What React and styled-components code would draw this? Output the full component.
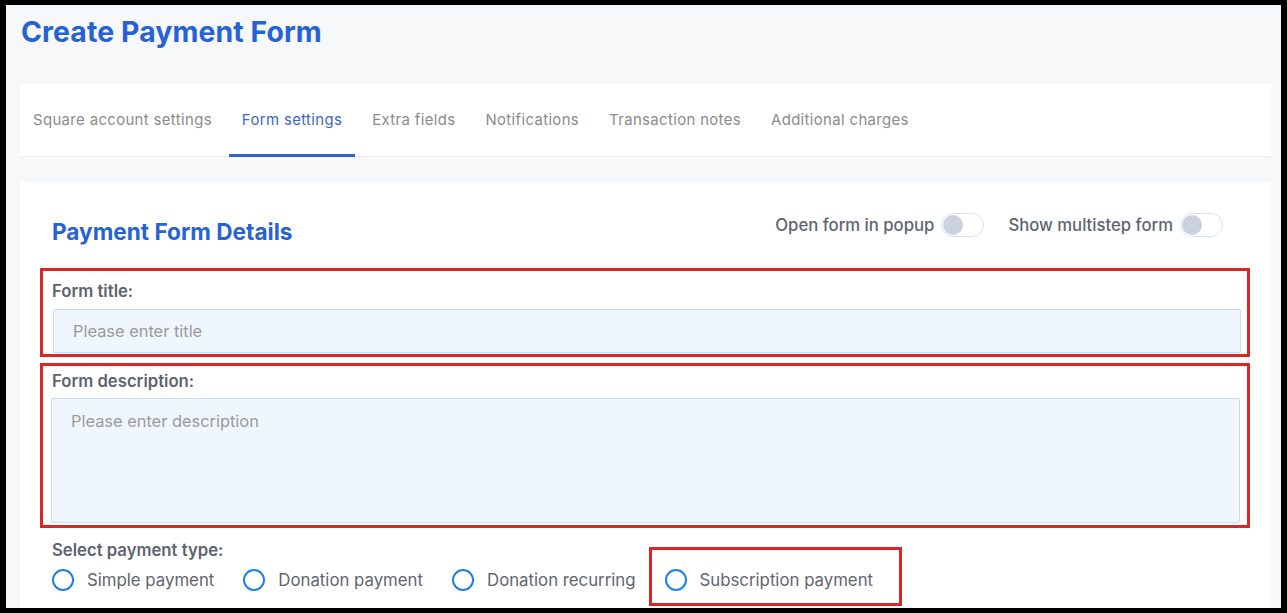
import React from "react";
import styled, { createGlobalStyle } from "styled-components";

const Global = createGlobalStyle`
  html, body { margin: 0; padding: 0; background: #000; }
  body { font-family: "Inter", "Liberation Sans", sans-serif; }
  * { box-sizing: border-box; }
`;

const Frame = styled.div`
  width: 1287px;
  height: 613px;
  padding: 5px 6px 5px 6px;
  background: #000;
`;

const Page = styled.div`
  width: 1275px;
  height: 603px;
  background: #f7f8fa;
  overflow: hidden;
  padding: 10px 10px 0 14px;
`;

const Title = styled.h1`
  margin: 0 0 0 1px;
  font-size: 28.4px;
  line-height: 34px;
  font-weight: 700;
  color: #2762d3;
  letter-spacing: 0.1px;
`;

const TabBar = styled.nav`
  margin-top: 35px;
  background: #fff;
  height: 73px;
  border-bottom: 1px solid #eceef2;
  display: flex;
  gap: 4px;
`;

const Tab = styled.div`
  padding: 0 13px;
  display: flex;
  align-items: center;
  font-size: 14.9px;
  letter-spacing: 0.37px;
  color: ${(p) => (p.$active ? "#3b67c6" : "#8b8b8b")};
  border-bottom: 3px solid ${(p) => (p.$active ? "#2c64cc" : "transparent")};
  margin-bottom: -1px;
  padding-top: 1px;
`;

const Card = styled.section`
  margin-top: 25px;
  background: #fff;
  padding: 26px 21px 0 20px;
  height: 440px;
`;

const HeaderRow = styled.div`
  display: flex;
  align-items: center;
  justify-content: space-between;
  height: 40px;
  padding: 0 27px 0 12px;
  margin-bottom: 20px;
`;

const Heading = styled.h2`
  margin: 6px 0 0 0;
  font-size: 22.6px;
  font-weight: 700;
  color: #2762d3;
`;

const Toggles = styled.div`
  display: flex;
  align-items: center;
  gap: 24px;
  margin-top: -6px;
`;

const ToggleLabel = styled.label`
  display: flex;
  align-items: center;
  gap: 7px;
  font-size: 16.7px;
  font-weight: 500;
  color: #5d6571;
`;

const Track = styled.span`
  width: 43px;
  height: 24px;
  border-radius: 12px;
  border: 1.5px solid #d6e3f7;
  background: #fff;
  display: flex;
  align-items: center;
  padding-left: 1px;
`;

const Knob = styled.span`
  width: 20px;
  height: 20px;
  border-radius: 50%;
  background: #cbd2dd;
`;

const Marked = styled.div`
  border: 3px solid #dc2626;
  padding: ${(p) => p.$pad};
  margin-bottom: ${(p) => p.$mb || 0};
`;

const FieldLabel = styled.div`
  font-size: 16.7px;
  font-weight: 600;
  line-height: 20px;
  color: #5c6470;
  margin-left: ${(p) => p.$ml || "0"};
  margin-bottom: ${(p) => p.$mb};
`;

const Input = styled.input`
  display: block;
  width: 100%;
  height: 44px;
  background: #f0f6fe;
  border: 1px solid #cbdaee;
  border-radius: 2px;
  padding: 0 19px;
  font-family: inherit;
  font-size: 16.4px;
  color: #333;
  outline: none;
  &::placeholder { color: #9a9a9a; }
`;

const TextArea = styled.textarea`
  display: block;
  width: 100%;
  height: 125px;
  background: #f0f6fe;
  border: 1px solid #cbdaee;
  border-radius: 2px;
  padding: 12px 19px;
  font-family: inherit;
  font-size: 16.4px;
  color: #333;
  resize: none;
  outline: none;
  &::placeholder { color: #9a9a9a; }
`;

const TypeSection = styled.div`
  padding: 12px 0 0 12px;
`;

const RadioRow = styled.div`
  display: flex;
  align-items: center;
  gap: 29px;
  margin-top: 9px;
`;

const RadioItem = styled.label`
  display: flex;
  align-items: center;
  gap: 13px;
  font-size: 16.8px;
  color: #5f6670;
  ${(p) =>
    p.$marked &&
    `
    border: 3px solid #dc2626;
    padding: 19px 26px 12px 13px;
    margin: -22px -29px -15px -16px;
  `}
`;

const Circle = styled.span`
  width: 22px;
  height: 22px;
  border-radius: 50%;
  border: 2px solid #1e80e2;
  flex: none;
`;

const tabs = [
  "Square account settings",
  "Form settings",
  "Extra fields",
  "Notifications",
  "Transaction notes",
  "Additional charges",
];

const types = ["Simple payment", "Donation payment", "Donation recurring", "Subscription payment"];

export default function App() {
  return (
    <>
      <Global />
      <Frame>
        <Page>
          <Title>Create Payment Form</Title>
          <TabBar>
            {tabs.map((t) => (
              <Tab key={t} $active={t === "Form settings"}>
                {t}
              </Tab>
            ))}
          </TabBar>
          <Card>
            <HeaderRow>
              <Heading>Payment Form Details</Heading>
              <Toggles>
                <ToggleLabel>
                  Open form in popup
                  <Track>
                    <Knob />
                  </Track>
                </ToggleLabel>
                <ToggleLabel>
                  Show multistep form
                  <Track>
                    <Knob />
                  </Track>
                </ToggleLabel>
              </Toggles>
            </HeaderRow>
            <Marked $pad="10px 6px 1px 10px" $mb="6px">
              <FieldLabel $ml="-1px" $mb="8px">Form title:</FieldLabel>
              <Input placeholder="Please enter title" />
            </Marked>
            <Marked $pad="5px 7px 2px 8px">
              <FieldLabel $ml="1px" $mb="7px">Form description:</FieldLabel>
              <TextArea placeholder="Please enter description" />
            </Marked>
            <TypeSection>
              <FieldLabel $mb="0">Select payment type:</FieldLabel>
              <RadioRow>
                {types.map((t, i) => (
                  <RadioItem key={t} $marked={i === 3}>
                    <Circle />
                    {t}
                  </RadioItem>
                ))}
              </RadioRow>
            </TypeSection>
          </Card>
        </Page>
      </Frame>
    </>
  );
}
